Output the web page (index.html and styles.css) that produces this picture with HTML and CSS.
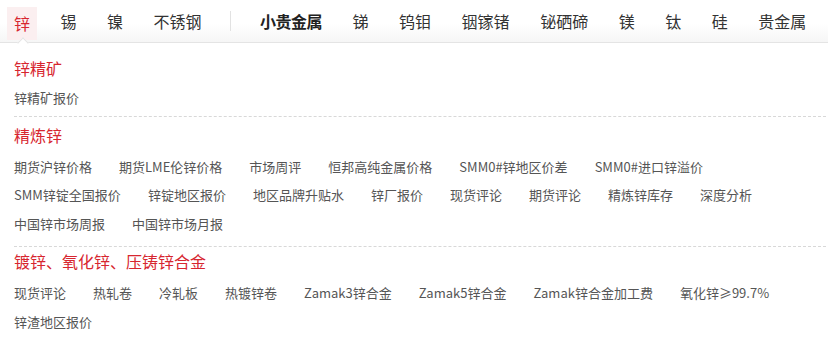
FILE: index.html
```html
<!DOCTYPE html>
<html lang="zh-CN">
<head>
  <meta charset="UTF-8">
  <meta name="viewport" content="width=device-width, initial-scale=1.0">
  <title>锌</title>
  <link rel="stylesheet" href="styles.css">
</head>
<body>
<div class="menu-panel">
  <!-- Tabs -->
  <div class="tab-bar">
    <a class="tab active">锌</a>
    <a class="tab">锡</a>
    <a class="tab">镍</a>
    <a class="tab">不锈钢</a>
    <span class="tab-divider"></span>
    <a class="tab strong">小贵金属</a>
    <a class="tab">锑</a>
    <a class="tab">钨钼</a>
    <a class="tab">铟镓锗</a>
    <a class="tab">铋硒碲</a>
    <a class="tab">镁</a>
    <a class="tab">钛</a>
    <a class="tab">硅</a>
    <a class="tab">贵金属</a>
  </div>

  <!-- 锌精矿 -->
  <div class="section first">
    <div class="section-title">锌精矿</div>
    <div class="link-list">
      <a>锌精矿报价</a>
    </div>
  </div>

  <!-- 精炼锌 -->
  <div class="section">
    <div class="section-title">精炼锌</div>
    <div class="link-list">
      <a>期货沪锌价格</a>
      <a>期货LME伦锌价格</a>
      <a>市场周评</a>
      <a>恒邦高纯金属价格</a>
      <a>SMM0#锌地区价差</a>
      <a>SMM0#进口锌溢价</a>
      <a>SMM锌锭全国报价</a>
      <a>锌锭地区报价</a>
      <a>地区品牌升贴水</a>
      <a>锌厂报价</a>
      <a>现货评论</a>
      <a>期货评论</a>
      <a>精炼锌库存</a>
      <a>深度分析</a>
      <a>中国锌市场周报</a>
      <a>中国锌市场月报</a>
    </div>
  </div>

  <!-- 镀锌、氧化锌、压铸锌合金 -->
  <div class="section last">
    <div class="section-title">镀锌、氧化锌、压铸锌合金</div>
    <div class="link-list">
      <a>现货评论</a>
      <a>热轧卷</a>
      <a>冷轧板</a>
      <a>热镀锌卷</a>
      <a>Zamak3锌合金</a>
      <a>Zamak5锌合金</a>
      <a>Zamak锌合金加工费</a>
      <a>氧化锌≥99.7%</a>
      <a>锌渣地区报价</a>
    </div>
  </div>
</div>
</body>
</html>
```

FILE: styles.css
```css
body, html {
  margin: 0;
  padding: 0;
  background: #fff;
  font-family: "Noto Sans CJK SC", "Noto Sans", sans-serif;
}

.menu-panel {
  width: 828px;
  height: 344px;
  background: #fff;
  overflow: hidden;
}

.tab-bar {
  height: 42px;
  display: flex;
  align-items: center;
  padding-left: 7px;
  border-bottom: 1px solid #e4e4e4;
  background: linear-gradient(#fff 55%, #f6f6f6);
  position: relative;
  white-space: nowrap;
}

.tab {
  flex-shrink: 0;
  font-size: 16px;
  color: #333;
  line-height: 33px;
  padding: 0 7px;
  margin-right: 16.5px;
  cursor: pointer;
  text-decoration: none;
  position: relative;
}

.tab.active {
  color: #d7262f;
  background: #fbeff0;
  align-self: flex-end;
  margin-bottom: 2px;
}

/* small notch under the active tab */
.tab.active::after {
  content: "";
  position: absolute;
  left: 12px;
  bottom: -7px;
  width: 7px;
  height: 7px;
  background: #fff;
  border-left: 1px solid #e4e4e4;
  border-top: 1px solid #e4e4e4;
  transform: rotate(45deg);
}

.tab.strong {
  font-weight: bold;
  color: #222;
  letter-spacing: -0.5px;
}

.tab-divider {
  flex-shrink: 0;
  width: 1px;
  height: 20px;
  background: #e2e2e2;
  margin: 0 22px 0 5px;
}

.section {
  margin: 0 2px 0 14px;
  padding: 6px 0 8px;
  border-bottom: 1px dashed #d8d8d8;
}

.section.first {
  padding-top: 13px;
  padding-bottom: 3px;
}

.section.last {
  border-bottom: none;
  padding-top: 2px;
}

.section-title {
  font-size: 16px;
  line-height: 24px;
  color: #d7262f;
}

.link-list {
  display: flex;
  flex-wrap: wrap;
  margin-top: 6px;
}

.section.first .link-list {
  margin-top: 4px;
}

.link-list a {
  font-size: 13px;
  line-height: 28.5px;
  color: #555;
  margin-right: 27px;
  cursor: pointer;
  white-space: nowrap;
}
```
